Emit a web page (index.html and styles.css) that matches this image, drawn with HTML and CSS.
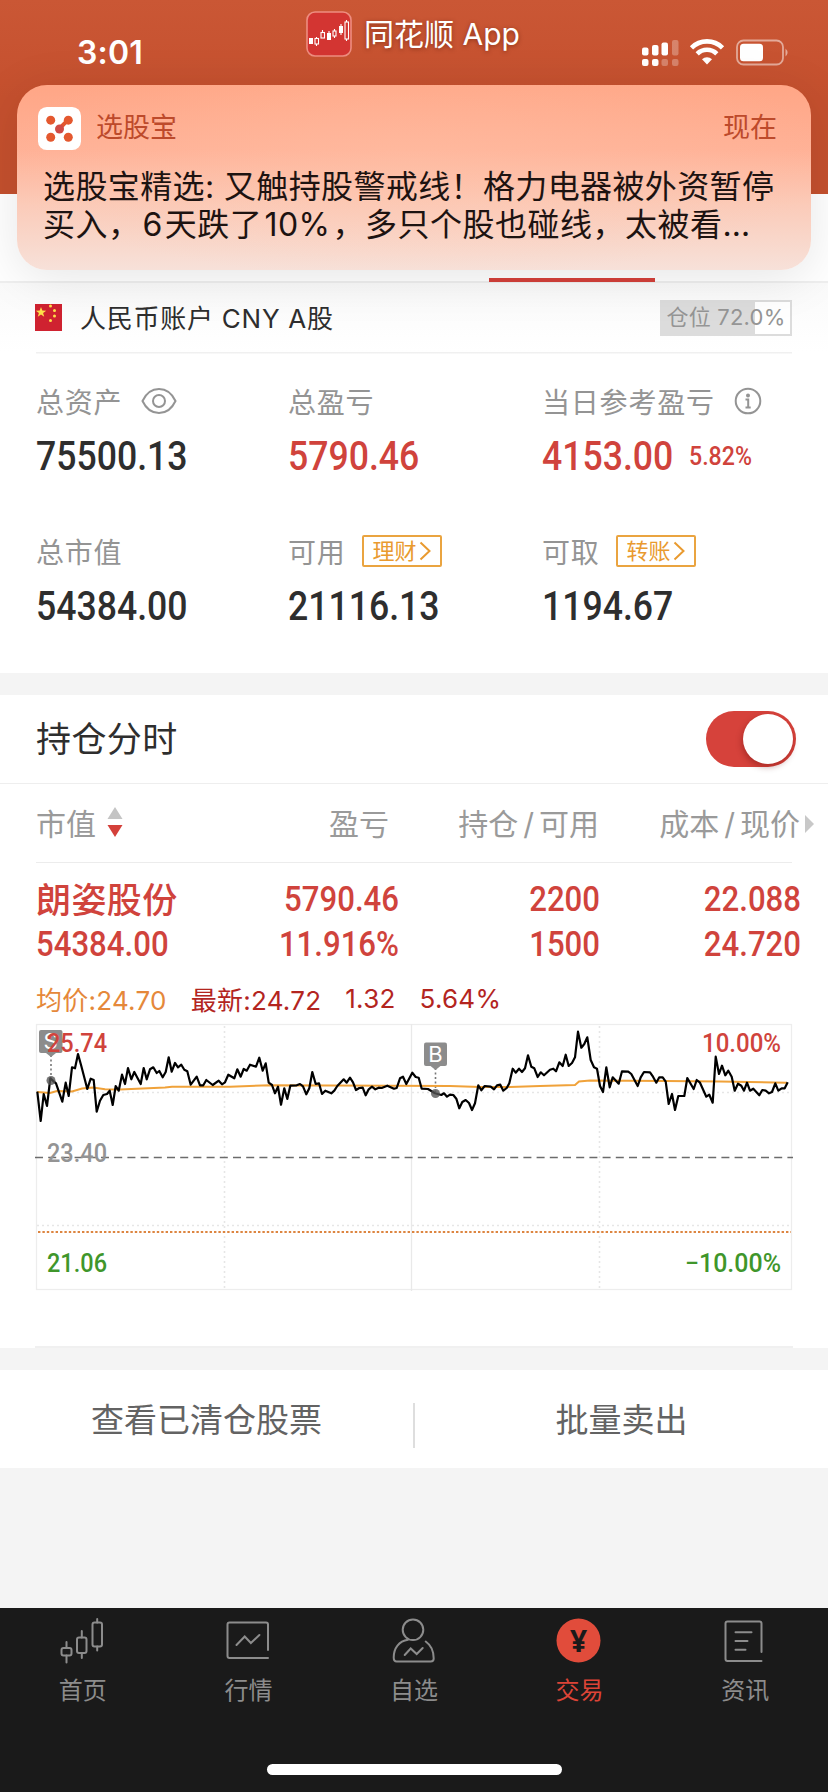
FILE: index.html
```
<!DOCTYPE html>
<html lang="zh-CN">
<head>
<meta charset="UTF-8">
<title>同花顺</title>
<link rel="stylesheet" href="styles.css">
</head>
<body>
<div class="phone">
	<div class="top">
		<div class="time">3:01</div>
		<div class="app">
			<svg class="app-icon" viewBox="0 0 46 46">
				<rect x="1" y="1" width="44" height="44" rx="8" fill="#d33532" stroke="#ee8d80" stroke-width="1.6"/>
				<g fill="#fff"><rect x="3" y="27" width="4" height="6"/><rect x="21" y="22" width="4" height="7"/><rect x="33" y="15" width="4" height="7"/></g>
				<g fill="none" stroke="#fff" stroke-width="1.1"><path d="M10.5 26v1M10.5 33v2M16.500 19v2M23 20v2M28.500 18v2M28.500 25v2M35 13v2M35 22v2M40.500 9v2M40.500 28v2"/><rect x="9" y="27.500" width="3.500" height="5.500"/><rect x="15" y="21.500" width="3.500" height="5.500"/><rect x="27" y="20" width="3" height="5"/><rect x="39" y="11" width="3.500" height="17"/></g>
			</svg>
			<span>同花顺 App</span>
		</div>
		<svg class="status" viewBox="0 0 148 28">
			<g fill="#fff"><rect x="0" y="8.500" width="6.500" height="8" rx="2"/><rect x="10" y="6" width="6.500" height="10.500" rx="2"/><rect x="19.500" y="3.500" width="6.500" height="13" rx="2"/><rect x="0" y="20" width="6.500" height="7" rx="2"/><rect x="10" y="20" width="6.500" height="7" rx="2"/></g>
			<g fill="#fff" opacity=".28"><rect x="30" y="1" width="6.500" height="15.500" rx="2"/><rect x="19.500" y="20" width="6.500" height="7" rx="2"/><rect x="30" y="20" width="6.500" height="7" rx="2"/></g>
			<g fill="none" stroke="#fff" stroke-width="4.600"><path d="M49.500 8.800a22 22 0 0 1 31 0"/><path d="M55.200 14.800a14 14 0 0 1 19.600 0"/></g>
			<path d="M65 25.500l-5-5.200a7.200 7.200 0 0 1 10 0z" fill="#fff"/>
			<rect x="95" y="1.500" width="46" height="24" rx="6.500" fill="none" stroke="#fff" stroke-width="1.800" opacity=".5"/>
			<rect x="98" y="4.800" width="23" height="17.500" rx="3.500" fill="#fff"/>
			<path d="M143.500 9.500q4 4 0 8z" fill="#fff" opacity=".5"/>
		</svg>
	</div>
	<div class="tabs"><i class="tab-line"></i></div>

	<div class="notice">
		<div class="notice-head">
			<svg class="notice-icon" viewBox="0 0 44 44">
				<rect width="44" height="44" rx="9" fill="#fff"/>
				<path d="M22 22l8-8" stroke="#e2552f" stroke-width="4"/>
				<g fill="#e4582f"><circle cx="13" cy="13.500" r="4.600"/><circle cx="31" cy="13.500" r="4.600"/><circle cx="13" cy="31" r="4.600"/><circle cx="31" cy="31" r="4.600"/></g>
				<circle cx="22" cy="22.500" r="4.600" fill="#d04a45"/>
			</svg>
			<span class="notice-name">选股宝</span>
			<span>现在</span>
		</div>
		<p>选股宝精选: 又触持股警戒线！格力电器被外资暂停</p>
		<p class="line2">买入，<b>6</b>天跌了<b>10%</b>，多只个股也碰线，太被看…</p>
	</div>

	<div class="account">
		<svg class="flag" viewBox="0 0 27 27">
			<rect width="27" height="27" fill="#cf2230"/>
			<g fill="#ffe14a"><path d="M6 3l1.300 3.600 3.900.1-3.100 2.400 1.100 3.700L6 10.600l-3.200 2.200 1.100-3.700L.8 6.700l3.900-.1z"/><circle cx="15.500" cy="2" r="1.500"/><circle cx="19.500" cy="6.500" r="1.500"/><circle cx="19.500" cy="12" r="1.500"/><circle cx="15.500" cy="16.500" r="1.500"/></g>
		</svg>
		<span class="account-name">人民币账户 CNY A股</span>
		<span class="position">仓位 72.0%</span>
	</div>

	<div class="assets">
		<div class="item">
			<div class="label">总资产
				<svg class="eye" viewBox="0 0 36 28"><path d="M1.500 14C9-2 27-2 34.500 14C27 30 9 30 1.500 14z"/><circle cx="18" cy="14" r="6"/></svg>
			</div>
			<div class="value"><span class="num">75500.13</span></div>
		</div>
		<div class="item">
			<div class="label">总盈亏</div>
			<div class="value red"><span class="num">5790.46</span></div>
		</div>
		<div class="item">
			<div class="label">当日参考盈亏
				<svg class="info" viewBox="0 0 28 28"><circle cx="14" cy="14" r="12.300"/><circle cx="14" cy="8.500" r="1" /><path d="M11.500 12.500h2.700v8M11.500 20.500h5.200"/></svg>
			</div>
			<div class="value red"><span class="num">4153.00</span><span class="num pct">5.82%</span></div>
		</div>
		<div class="item">
			<div class="label">总市值</div>
			<div class="value"><span class="num">54384.00</span></div>
		</div>
		<div class="item">
			<div class="label">可用<span class="tag">理财<svg viewBox="0 0 12 20"><path d="M1.500 1.500l9 8.500-9 8.500"/></svg></span></div>
			<div class="value"><span class="num">21116.13</span></div>
		</div>
		<div class="item">
			<div class="label">可取<span class="tag">转账<svg viewBox="0 0 12 20"><path d="M1.500 1.500l9 8.500-9 8.500"/></svg></span></div>
			<div class="value"><span class="num">1194.67</span></div>
		</div>
	</div>

	<div class="hold-title">
		<span class="title">持仓分时</span>
		<span class="switch"><i></i></span>
	</div>

	<div class="hold-head">
		<span class="c1">市值<svg class="sort" viewBox="0 0 16 30"><path d="M8 0l7.500 12H.5z" fill="#c4c4c4"/><path d="M8 30L.5 18h15z" fill="#d4403a"/></svg></span>
		<span class="c2">盈亏</span>
		<span class="c3">持仓<b>/</b>可用</span>
		<span class="c4">成本<b>/</b>现价</span>
		<svg class="more" viewBox="0 0 9 18"><path d="M0 0l9 9-9 9z" fill="#c8c8c8"/></svg>
	</div>

	<div class="hold-row">
		<span class="stock">朗姿股份</span>
		<span class="num">5790.46</span>
		<span class="num">2200</span>
		<span class="num">22.088</span>
		<span class="num first">54384.00</span>
		<span class="num">11.916%</span>
		<span class="num">1500</span>
		<span class="num">24.720</span>
	</div>

	<div class="quote">
		<span class="avg">均价:24.70</span>
		<span>最新:24.72</span>
		<span>1.32</span>
		<span>5.64%</span>
	</div>

	<svg class="chart" viewBox="0 1020 828 326">
		<!-- 网格 -->
		<rect x="36.500" y="1024.500" width="755" height="265" fill="none" stroke="#ededed" stroke-width="1.300"/>
		<path d="M411.500 1024v267" stroke="#e9e9e9" stroke-width="1.300"/>
		<path d="M224.500 1026v265M599.500 1026v265M37 1092.500h755M37 1225.500h755" stroke="#e6e6e6" stroke-width="1.600" stroke-dasharray="2 3"/>
		<path d="M35 1157.500h758" stroke="#6c6c6c" stroke-width="1.400" stroke-dasharray="8 5.200"/>
		<path d="M38 1232h753" stroke="#dd8540" stroke-width="2" stroke-dasharray="2.400 2"/>
		<!-- 买卖点 -->
		<g class="mark">
			<path d="M51 1055v25M435.500 1068v24" stroke="#777" stroke-width="1.600" stroke-dasharray="2 2.500"/>
			<rect x="39" y="1030" width="23.500" height="23" rx="2"/>
			<path d="M46 1053h10l-5 4z"/>
			<rect x="424" y="1042.500" width="23" height="23.500" rx="2"/>
			<path d="M430.500 1066h10l-5 4z"/>
			<text x="50.500" y="1049">S</text>
			<text x="435.500" y="1062">B</text>
		</g>
		<!-- 均价线 -->
		<polyline class="avg-line" points="37,1092 50,1093 57,1091 72,1091.5 82,1088.5 93,1087.5 105,1089.3 120,1089.5 165,1087.5 172,1086.7 230,1086.7 270,1085.3 450,1086 480,1087 510,1087 540,1086 575,1085 579,1081.5 590,1080.5 665,1081 720,1081.500 787,1082.700"/>
		<!-- 分时线 -->
		<polyline class="price-line" points="37.3,1091.7 40.7,1121 43.7,1094 47,1106 50.3,1078.3 56,1083.3 62.3,1101.7 65.7,1082.7 68.7,1096 72,1067.3 75,1068.3 78,1054 81.3,1066 87.3,1089 90.7,1078.7 93.7,1080 96.7,1111.7 100,1100.7 103.3,1095 107,1094 109.7,1090.7 112.7,1105 115.7,1086 118.7,1090.7 122,1074.7 125,1084 128,1068 131.3,1079.3 134.3,1072 140.7,1084 143.7,1068 146.7,1079.3 150,1069.3 153.3,1067.3 156.7,1073 159.3,1071 162.7,1077.3 165.7,1072 168.7,1057.3 171.7,1071.7 175,1063 178,1067.3 181.3,1064.7 184.3,1069.7 187.3,1071.3 190.7,1084.7 196.7,1076.7 200,1085.3 203.3,1085.3 206.3,1080 212.7,1085 218.7,1080.7 222,1084.3 225,1082.3 228.3,1074.7 234.3,1078.3 237.3,1069.3 240.7,1076.7 243.7,1069 246.7,1070.7 250,1064.7 256,1066.7 259.3,1057.7 262.7,1070.7 265.7,1063.3 268.7,1082.7 272,1085 275,1093.3 278,1086.7 281,1104.7 284.3,1088.3 287.3,1099 290.3,1085.7 296.7,1085.3 300,1084 303,1086.3 306.3,1094.3 309.3,1088.3 312.3,1072 315.7,1084 319,1083.3 322,1094 325.3,1090.7 331.3,1093.3 334.3,1090.7 337.3,1086 343.7,1079.3 346.7,1082.7 350,1077.7 353,1082.3 356,1090 359.3,1088 362.7,1087.7 365.7,1095.3 368.7,1089.3 372,1086.7 375.3,1089.3 378.7,1087.7 381.7,1088 387.3,1085.7 394,1088.7 396.7,1088 400,1078.3 403,1076.7 406.3,1084 412.3,1072.7 415.7,1077 418.7,1077.7 421.7,1088.7 428,1089 435,1093.3 441.3,1095 444,1093.3 447,1096.7 450,1094.7 453.3,1095 456.3,1098.7 459.3,1108.3 462.3,1102 465.7,1100 469,1103 472,1110 475,1103.3 478.3,1085.3 481.3,1090.3 484.7,1086 490.7,1086.7 494,1089.3 497,1085.3 500.3,1084.7 503.3,1090.7 506.7,1088 509.3,1083.3 512.7,1068.7 515.7,1072.7 519,1068.7 522,1072 525,1068.3 528,1055.3 531.3,1066.7 534.3,1068.3 537.7,1077 540.7,1072.3 544,1075.3 550,1069.7 553.3,1068.7 556,1071.3 559.3,1062.3 562.7,1066 565.7,1054.7 568.7,1066 572,1063 575,1057.3 578,1031.7 581.3,1047.7 584.3,1044 587.3,1037.3 590.7,1060 594,1067.3 597,1068.7 600,1086 603,1092 606.3,1067.3 609.7,1087.3 612.7,1077.3 618.7,1083.7 622,1071.3 628.3,1071.7 631.3,1074 637.7,1086 640.7,1077.3 644,1072 650,1072.3 653,1076.7 656.3,1082.7 659.3,1077.3 662.7,1077.3 665.7,1081.7 668.7,1104 672,1094 675,1110 678.3,1096 684.3,1096 687.3,1078 693.7,1089 696.7,1080 700,1082.7 706.3,1096.7 709.3,1094.7 712.7,1102.7 715.7,1056.7 719,1074 722,1065.7 725.3,1075.3 728.3,1070.7 731.7,1076.7 734.7,1090.7 738,1083.7 741.3,1085.7 744,1090.7 747,1082.7 750,1090.7 753.3,1088.7 759.3,1095.3 762.3,1090 765.7,1090.7 769,1093.3 772,1092 775.3,1083.3 778.3,1090.7 781.7,1088.3 784.7,1088.3 787.7,1082.3"/>
		<g fill="#555" opacity=".8"><circle cx="51" cy="1080.500" r="4.500"/><circle cx="435.500" cy="1093.500" r="4.500"/></g>
		<g class="scale">
			<text x="47" y="1052" textLength="60" lengthAdjust="spacingAndGlyphs" fill="#d0433c">25.74</text>
			<text x="47" y="1162" textLength="60" lengthAdjust="spacingAndGlyphs" fill="#949494">23.40</text>
			<text x="47" y="1272" textLength="60" lengthAdjust="spacingAndGlyphs" fill="#3f962b">21.06</text>
			<text x="702" y="1052" textLength="79" lengthAdjust="spacingAndGlyphs" fill="#d0433c">10.00%</text>
			<text x="685" y="1272" textLength="96" lengthAdjust="spacingAndGlyphs" fill="#3f962b">−10.00%</text>
		</g>
	</svg>
	<div class="chart-end"></div>

	<div class="actions">
		<span>查看已清仓股票</span>
		<i></i>
		<span>批量卖出</span>
	</div>

	<div class="nav">
		<div class="nav-items">
			<div class="nav-item">
				<svg viewBox="0 0 48 48"><rect x="2.500" y="32" width="10" height="7.500" rx="2"/><rect x="18" y="21.500" width="9.500" height="15.500" rx="2"/><rect x="33.500" y="6.500" width="9.500" height="24" rx="2"/><path d="M7.500 26v6M7.500 39.500v7M22.800 15v6.500M22.800 37v5M38.200 3v3.500M38.200 30.500v4"/></svg>
				<span>首页</span>
			</div>
			<div class="nav-item">
				<svg viewBox="0 0 48 48"><path d="M44 34V8.500q0-2-2-2H5.500q-2 0-2 2V40q0 2 2 2H44M12.500 29l8.200-8.500 6.200 6.500 8.500-8"/></svg>
				<span>行情</span>
			</div>
			<div class="nav-item">
				<svg viewBox="0 0 48 48"><circle cx="23" cy="13.800" r="10.300"/><path d="M18 23.700C9 25 3.700 32 3.700 41.500q0 4 3 4h34q3 0 3-3c0-8-3-13.500-8-17M14.700 39l6-6.500 6 5.500 6-6"/></svg>
				<span>自选</span>
			</div>
			<div class="nav-item on">
				<svg viewBox="0 0 48 48"><circle cx="22.500" cy="24.500" r="22" fill="#e14c3b" stroke="none"/><text x="22.500" y="36">¥</text></svg>
				<span>交易</span>
			</div>
			<div class="nav-item">
				<svg viewBox="0 0 48 48"><path d="M40.500 36V7.500q0-2-2-2h-32q-2 0-2 2V43q0 2 2 2h34M14.500 16.300h16M14.500 25h12M14.500 33.800h10"/></svg>
				<span>资讯</span>
			</div>
		</div>
		<div class="home-bar"></div>
	</div>
</div>
</body>
</html>
```
FILE: styles.css
```
*{
	box-sizing:border-box;
}
body{
	margin:0;
	background:#f4f4f4;
	font-family:"Inter","Noto Sans CJK SC",sans-serif;
	color:#2e2e2e;
}
p{
	margin:0;
}
i,b{
	font-style:normal;
	font-weight:normal;
}
svg{
	display:block;
	flex:none;
}
.phone{
	position:relative;
	width:828px;
	height:1792px;
	overflow:hidden;
	display:flex;
	flex-direction:column;
}
.phone>div{
	flex:none;
}
/* 顶部 */
.top{
	height:194px;
	padding:11px 38px 0 77px;
	display:flex;
	align-items:flex-start;
	color:#fff;
	background:linear-gradient(#ca5735,#c5502e 50%,#c4502e);
}
.time{
	width:229px;
	padding-top:22px;
	font-size:32px;
	line-height:40px;
	font-weight:600;
	letter-spacing:.2px;
}
.app{
	display:flex;
	align-items:center;
	gap:12px;
	width:336px;
	font-size:30px;
	line-height:46px;
	text-shadow:0 1px 4px rgba(80,20,0,.5);
	white-space:nowrap;
}
.app-icon{
	width:46px;
	height:46px;
}
.status{
	width:148px;
	height:28px;
	margin-top:28px;
}
.tabs{
	height:89px;
	padding-left:489px;
	background:#fff;
	border-bottom:2px solid #efefef;
	display:flex;
	align-items:flex-end;
}
.tab-line{
	width:166px;
	height:4px;
	margin-bottom:-1px;
	background:#d4403a;
}
/* 推送横幅 */
.notice{
	position:absolute;
	left:17px;
	top:85px;
	width:794px;
	height:185px;
	padding:21px 34px 0 26px;
	border-radius:30px;
	background:radial-gradient(ellipse 420px 120px at 50% 40%,rgba(255,196,170,.4),rgba(255,196,170,0)),linear-gradient(#ffa686,#ffb196 35%,#fbcbb9 65%,#f7e1d9);
	box-shadow:0 8px 50px rgba(0,0,0,.1);
	color:#1d1311;
	font-size:32px;
	line-height:38px;
}
.notice p{
	white-space:nowrap;
	letter-spacing:.38px;
}
.notice .line2{
	letter-spacing:.5px;
}
.notice .line2 b{
	margin:0 2px;
}
.notice-head{
	display:flex;
	align-items:center;
	height:44px;
	margin:0 0 18px -5px;
	font-size:27px;
	color:#bd4a2b;
}
.notice-icon{
	width:43px;
	height:43px;
	margin-right:15px;
}
.notice-name{
	flex:1;
}
/* 账户 */
.account{
	height:69px;
	margin:0;
	padding:0 36px 0 35px;
	display:flex;
	align-items:center;
	background:linear-gradient(#fafafa,#fff);
}
.flag{
	width:27px;
	height:27px;
	margin-right:18px;
}
.account-name{
	flex:1;
	padding-bottom:2px;
	font-size:26px;
	letter-spacing:.75px;
}
.position{
	width:132px;
	height:36px;
	border:2px solid #dcdcdc;
	background:linear-gradient(90deg,#dcdcdc 72.5%,#fff 72.5%);
	color:#959595;
	font-size:22px;
	line-height:31px;
	letter-spacing:.2px;
	text-align:center;
	white-space:nowrap;
}
.assets{
	height:321px;
	margin:0;
	padding:24px 36px 0;
	display:grid;
	grid-template-columns:252px 254px 250px;
	grid-template-rows:150px 146px;
	background:#fff linear-gradient(#f0f0f0,#f0f0f0) no-repeat center top/756px 1.500px;
}
.label{
	display:flex;
	align-items:center;
	height:50px;
	font-size:28px;
	letter-spacing:.8px;
	color:#949494;
	white-space:nowrap;
}
.value{
	display:flex;
	align-items:center;
	height:60px;
	font-size:40px;
}
.num{
	display:inline-block;
	font-family:"Roboto",sans-serif;
	font-weight:500;
	transform:scaleX(.89);
	transform-origin:left center;
}
.pct{
	font-size:26px;
	margin-left:-1px;
}
.red{
	color:#d0433c;
}
.eye,.info{
	fill:none;
	stroke:#949494;
	stroke-width:2;
}
.eye{
	width:36px;
	height:28px;
	margin-left:19px;
}
.info{
	width:28px;
	height:28px;
	margin-left:19px;
}
.tag{
	display:flex;
	align-items:center;
	justify-content:center;
	gap:2px;
	width:80px;
	height:32px;
	margin-left:16px;
	border:2px solid #eaa440;
	border-radius:2px;
	color:#e99a2f;
	font-size:22px;
	line-height:24px;
	letter-spacing:0;
}
.tag svg{
	width:12px;
	height:20px;
	fill:none;
	stroke:#e99a2f;
	stroke-width:2;
}
/* 持仓 */
.hold-title{
	height:89px;
	margin-top:22px;
	padding:0 32px 0 36px;
	display:flex;
	align-items:center;
	justify-content:space-between;
	background:#fff;
	border-bottom:1px solid #eee;
	font-size:35px;
}
.title{
	padding-bottom:5px;
	letter-spacing:.4px;
}
.switch{
	width:90px;
	height:56px;
	padding:3px;
	border-radius:28px;
	background:#d6423b;
	display:flex;
	justify-content:flex-end;
}
.switch i{
	width:50px;
	height:50px;
	border-radius:50%;
	background:#fff;
	box-shadow:-1px 3px 6px rgba(90,0,0,.35);
}
.hold-head{
	height:79px;
	padding-left:36px;
	display:flex;
	align-items:center;
	background:#fff linear-gradient(#ececec,#ececec) no-repeat center bottom/756px 1.500px;
	color:#9a9a9a;
	font-size:30px;
}
.hold-head span{
	padding-bottom:4px;
	text-align:right;
}
.hold-head .c1{
	width:152px;
	display:flex;
	align-items:center;
}
.hold-head b{
	padding:0 5px;
}
.c2{
	width:201px;
}
.c3{
	width:210px;
}
.c4{
	width:201px;
}
.sort{
	width:16px;
	height:30px;
	margin-left:11px;
}
.more{
	width:9px;
	height:18px;
	margin-left:5px;
}
.hold-row{
	height:117px;
	padding:14px 27px 0 36px;
	display:grid;
	grid-template-columns:164px 199px 201px 201px;
	grid-template-rows:46px 44px;
	align-items:center;
	background:#fff;
	color:#d0433c;
	font-size:35px;
	line-height:44px;
}
.hold-row .num{
	text-align:right;
	transform-origin:right center;
}
.hold-row .first{
	text-align:left;
	transform-origin:left center;
}
.stock{
	font-weight:500;
	letter-spacing:.4px;
	white-space:nowrap;
}
.quote{
	height:40px;
	padding:0 0 3px 36px;
	display:flex;
	align-items:center;
	gap:24px;
	background:#fff;
	color:#b3251f;
	font-size:26px;
	letter-spacing:.25px;
}
.avg{
	color:#e5883a;
}
.chart{
	width:828px;
	height:326px;
	background:#fff;
}
.mark{
	fill:#8c8c8c;
}
.mark text{
	font-size:22px;
	fill:#fff;
	text-anchor:middle;
}
.avg-line{
	fill:none;
	stroke:#f0a23a;
	stroke-width:2;
}
.price-line{
	fill:none;
	stroke:#000;
	stroke-width:2.200;
	stroke-linejoin:round;
}
.scale{
	font:500 26px "Roboto",sans-serif;
}
.chart-end{
	height:2px;
	background:#fff linear-gradient(#f0f0f0,#f0f0f0) no-repeat center/758px 2px;
}
/* 操作 */
.actions{
	height:98px;
	margin-top:22px;
	display:flex;
	align-items:center;
	background:#fff;
	color:#636363;
	font-size:33px;
}
.actions span{
	flex:1;
	padding-bottom:2px;
	text-align:center;
}
.actions i{
	width:2px;
	height:45px;
	margin-top:12px;
	background:#dedede;
}
/* 底部导航 */
.nav{
	height:184px;
	margin-top:auto;
	padding-top:8px;
	background:#1a1a1a;
}
.nav-items{
	display:flex;
	height:148px;
}
.nav-item{
	flex:1;
	display:flex;
	flex-direction:column;
	align-items:center;
	gap:9px;
	color:#8c8c8c;
	font-size:24px;
	line-height:36px;
}
.nav-item svg{
	width:48px;
	height:48px;
	fill:none;
	stroke:#8c8c8c;
	stroke-width:2;
	stroke-linecap:round;
}
.nav-item text{
	font:bold 30px "Noto Sans",sans-serif;
	text-anchor:middle;
	fill:#1a1a1a;
	stroke:none;
}
.nav-item.on{
	color:#dc4437;
}
.home-bar{
	width:295px;
	height:11px;
	margin:0 auto;
	border-radius:6px;
	background:#fff;
}
```
